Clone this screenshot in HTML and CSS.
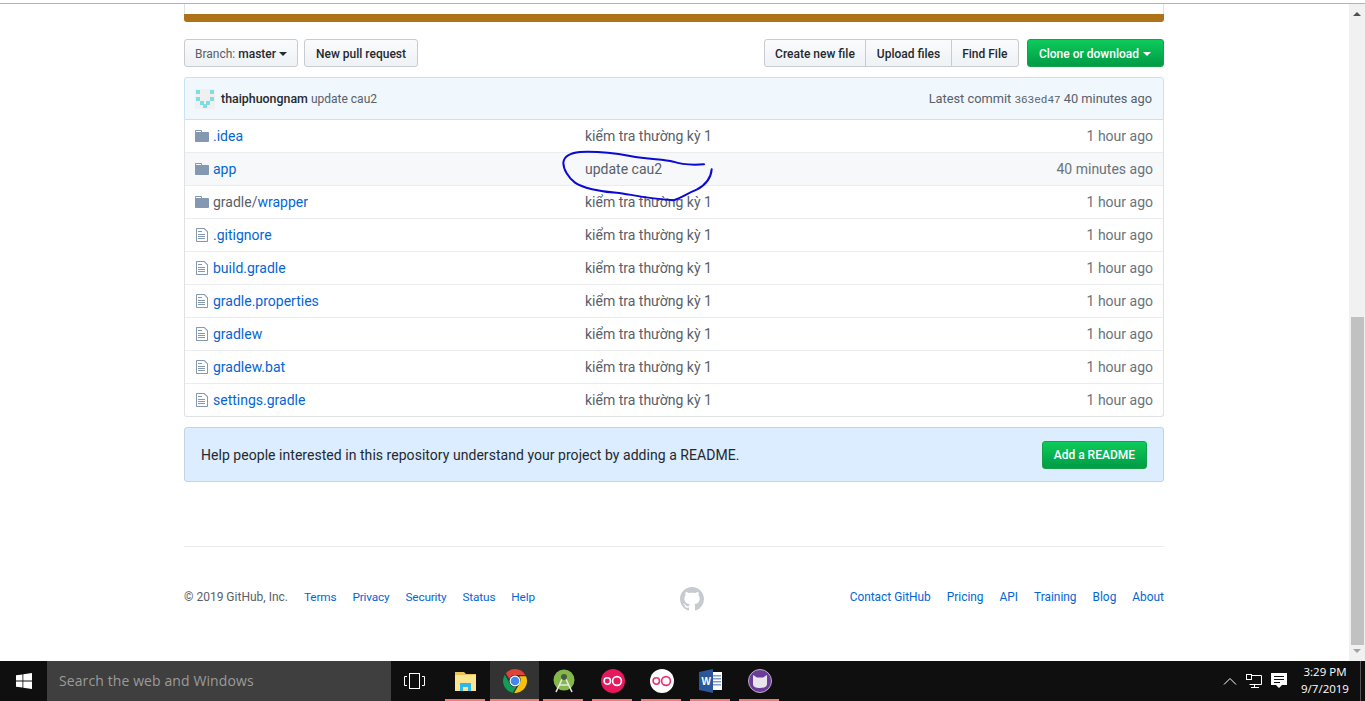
FILE: index.html
```html
<!DOCTYPE html>
<html lang="en">
<head>
    <meta charset="UTF-8">
    <meta name="viewport" content="width=device-width, initial-scale=1.0">
    <title>Repository</title>
    <link rel="stylesheet" href="styles.css">
</head>
<body>

<div class="screen">
    <div class="window">
        <main class="page">
            <div class="container">
                <div class="languages"><div class="languages-bar"></div></div>

                <div class="toolbar">
                    <button class="btn btn-branch"><span class="muted">Branch:</span> <b>master</b><i class="caret"></i></button>
                    <button class="btn">New pull request</button>
                    <div class="spacer"></div>
                    <div class="btn-group">
                        <button class="btn">Create new file</button>
                        <button class="btn">Upload files</button>
                        <button class="btn">Find File</button>
                    </div>
                    <button class="btn btn-green btn-clone">Clone or download<i class="caret"></i></button>
                </div>

                <div class="commit">
                    <svg class="avatar" viewBox="0 0 20 20">
                        <rect width="20" height="20" rx="1" fill="#f0f0f0"/>
                        <g fill="#7ddfe2">
                            <rect x="1" y="1" width="4" height="4"/>
                            <rect x="15" y="1" width="4" height="4"/>
                            <rect x="1" y="8" width="4" height="4"/>
                            <rect x="15" y="8" width="4" height="4"/>
                            <rect x="5" y="12" width="4" height="4"/>
                            <rect x="11" y="12" width="4" height="4"/>
                            <rect x="8" y="15" width="4" height="4"/>
                        </g>
                    </svg>
                    <a class="commit-author">thaiphuongnam</a>
                    <span class="muted commit-msg">update cau2</span>
                    <div class="spacer"></div>
                    <span class="muted">Latest commit <span class="sha">363ed47</span> 40 minutes ago</span>
                </div>

                <div class="files">
                    <div class="file-row">
                        <svg class="icon" viewBox="0 0 14 16"><path d="M13 4H7V3c0-.66-.31-1-1-1H1c-.55 0-1 .45-1 1v10c0 .55.45 1 1 1h12c.55 0 1-.45 1-1V5c0-.55-.45-1-1-1zM6 4H1V3h5v1z"/></svg>
                        <a class="file-name">.idea</a>
                        <span class="file-msg">kiểm tra thường kỳ 1</span>
                        <span class="file-age">1 hour ago</span>
                    </div>
                    <div class="file-row hover">
                        <svg class="icon" viewBox="0 0 14 16"><path d="M13 4H7V3c0-.66-.31-1-1-1H1c-.55 0-1 .45-1 1v10c0 .55.45 1 1 1h12c.55 0 1-.45 1-1V5c0-.55-.45-1-1-1zM6 4H1V3h5v1z"/></svg>
                        <a class="file-name">app</a>
                        <span class="file-msg">update cau2</span>
                        <span class="file-age">40 minutes ago</span>
                    </div>
                    <div class="file-row">
                        <svg class="icon" viewBox="0 0 14 16"><path d="M13 4H7V3c0-.66-.31-1-1-1H1c-.55 0-1 .45-1 1v10c0 .55.45 1 1 1h12c.55 0 1-.45 1-1V5c0-.55-.45-1-1-1zM6 4H1V3h5v1z"/></svg>
                        <a class="file-name"><span class="muted">gradle/</span>wrapper</a>
                        <span class="file-msg">kiểm tra thường kỳ 1</span>
                        <span class="file-age">1 hour ago</span>
                    </div>
                    <div class="file-row">
                        <svg class="icon" viewBox="0 0 12 16"><path d="M6 5H2V4h4v1zM2 8h7V7H2v1zm0 2h7V9H2v1zm0 2h7v-1H2v1zm10-7.500V14c0 .55-.45 1-1 1H1c-.55 0-1-.45-1-1V2c0-.55.45-1 1-1h7.500L12 4.500zM11 5L8 2H1v12h10V5z"/></svg>
                        <a class="file-name">.gitignore</a>
                        <span class="file-msg">kiểm tra thường kỳ 1</span>
                        <span class="file-age">1 hour ago</span>
                    </div>
                    <div class="file-row">
                        <svg class="icon" viewBox="0 0 12 16"><path d="M6 5H2V4h4v1zM2 8h7V7H2v1zm0 2h7V9H2v1zm0 2h7v-1H2v1zm10-7.500V14c0 .55-.45 1-1 1H1c-.55 0-1-.45-1-1V2c0-.55.45-1 1-1h7.500L12 4.500zM11 5L8 2H1v12h10V5z"/></svg>
                        <a class="file-name">build.gradle</a>
                        <span class="file-msg">kiểm tra thường kỳ 1</span>
                        <span class="file-age">1 hour ago</span>
                    </div>
                    <div class="file-row">
                        <svg class="icon" viewBox="0 0 12 16"><path d="M6 5H2V4h4v1zM2 8h7V7H2v1zm0 2h7V9H2v1zm0 2h7v-1H2v1zm10-7.500V14c0 .55-.45 1-1 1H1c-.55 0-1-.45-1-1V2c0-.55.45-1 1-1h7.500L12 4.500zM11 5L8 2H1v12h10V5z"/></svg>
                        <a class="file-name">gradle.properties</a>
                        <span class="file-msg">kiểm tra thường kỳ 1</span>
                        <span class="file-age">1 hour ago</span>
                    </div>
                    <div class="file-row">
                        <svg class="icon" viewBox="0 0 12 16"><path d="M6 5H2V4h4v1zM2 8h7V7H2v1zm0 2h7V9H2v1zm0 2h7v-1H2v1zm10-7.500V14c0 .55-.45 1-1 1H1c-.55 0-1-.45-1-1V2c0-.55.45-1 1-1h7.500L12 4.500zM11 5L8 2H1v12h10V5z"/></svg>
                        <a class="file-name">gradlew</a>
                        <span class="file-msg">kiểm tra thường kỳ 1</span>
                        <span class="file-age">1 hour ago</span>
                    </div>
                    <div class="file-row">
                        <svg class="icon" viewBox="0 0 12 16"><path d="M6 5H2V4h4v1zM2 8h7V7H2v1zm0 2h7V9H2v1zm0 2h7v-1H2v1zm10-7.500V14c0 .55-.45 1-1 1H1c-.55 0-1-.45-1-1V2c0-.55.45-1 1-1h7.500L12 4.500zM11 5L8 2H1v12h10V5z"/></svg>
                        <a class="file-name">gradlew.bat</a>
                        <span class="file-msg">kiểm tra thường kỳ 1</span>
                        <span class="file-age">1 hour ago</span>
                    </div>
                    <div class="file-row">
                        <svg class="icon" viewBox="0 0 12 16"><path d="M6 5H2V4h4v1zM2 8h7V7H2v1zm0 2h7V9H2v1zm0 2h7v-1H2v1zm10-7.500V14c0 .55-.45 1-1 1H1c-.55 0-1-.45-1-1V2c0-.55.45-1 1-1h7.500L12 4.500zM11 5L8 2H1v12h10V5z"/></svg>
                        <a class="file-name">settings.gradle</a>
                        <span class="file-msg">kiểm tra thường kỳ 1</span>
                        <span class="file-age">1 hour ago</span>
                    </div>

                    <!-- hand drawn circle around the app row message -->
                    <svg class="scribble" viewBox="0 0 540 210">
                        <path d="M462 70C430 72 400 73 370 62C340 54 300 56 240 45C190 36 130 31 90 33C60 36 42 45 40 65C40 85 55 110 75 125C95 140 150 152 200 155C240 160 290 172 370 178C395 170 410 158 440 146C470 130 483 110 485 85"/>
                    </svg>
                </div>

                <div class="readme-prompt">
                    <span class="readme-text">Help people interested in this repository understand your project by adding a README.</span>
                    <button class="btn btn-green">Add a README</button>
                </div>

                <footer class="footer">
                    <div class="footer-left">
                        <span class="copyright">© 2019 GitHub, Inc.</span>
                        <a>Terms</a><a>Privacy</a><a>Security</a><a>Status</a><a>Help</a>
                    </div>
                    <svg class="footer-mark" viewBox="0 0 16 16"><path d="M8 0C3.58 0 0 3.58 0 8c0 3.54 2.29 6.530 5.470 7.590.4.07.55-.17.55-.38 0-.19-.01-.82-.01-1.490-2.010.37-2.530-.49-2.690-.94-.09-.23-.48-.94-.82-1.130-.28-.15-.68-.52-.01-.53.63-.01 1.080.58 1.230.82.72 1.210 1.870.87 2.330.66.07-.52.28-.87.51-1.070-1.780-.2-3.640-.89-3.640-3.950 0-.87.31-1.590.82-2.150-.08-.2-.36-1.020.08-2.120 0 0 .67-.21 2.200.82.64-.18 1.320-.27 2-.27.68 0 1.360.09 2 .27 1.530-1.040 2.200-.82 2.200-.82.44 1.100.16 1.920.08 2.120.51.56.82 1.270.82 2.150 0 3.070-1.870 3.750-3.650 3.950.29.25.54.73.54 1.480 0 1.070-.01 1.930-.01 2.200 0 .21.15.46.55.38A8.013 8.013 0 0 0 16 8c0-4.420-3.580-8-8-8z"/></svg>
                    <div class="footer-right">
                        <a>Contact GitHub</a><a>Pricing</a><a>API</a><a>Training</a><a>Blog</a><a>About</a>
                    </div>
                </footer>
            </div>
        </main>

        <div class="scrollbar">
            <i class="arrow-up"></i>
            <div class="thumb"></div>
            <i class="arrow-down"></i>
        </div>
    </div>

    <div class="taskbar">
        <div class="start">
            <svg viewBox="0 0 16 16" width="16" height="16"><path fill="#fff" d="M0 2.300l6.500-.9v6.200H0zM7.300 1.300L16 0v7.600H7.300zM0 8.400h6.500v6.200L0 13.700zM7.300 8.400H16V16l-8.700-1.300z"/></svg>
        </div>
        <div class="search">Search the web and Windows</div>
        <div class="task-view">
            <svg viewBox="0 0 21 16" width="21" height="16" fill="none" stroke="#fff"><rect x="5.500" y="0.500" width="10" height="15"/><path d="M3 3.500H0.500v9H3M18 3.500h2.500v9H18"/></svg>
        </div>
        <div class="app running">
            <svg viewBox="0 0 24 24" width="24" height="24">
                <path fill="#e8c35a" d="M1 3h9l2 2h10v17H1z"/>
                <path fill="#fde58f" d="M1 6h21v16H1z"/>
                <path fill="#2bb9ee" d="M6 14h11v8h-3v-4H9v4H6z"/>
            </svg>
        </div>
        <div class="app running active">
            <svg viewBox="0 0 24 24" width="24" height="24">
                <path fill="#db4437" d="M12 0a12 12 0 0 1 10.400 6H12a6 6 0 0 0-5.700 4L2.900 4.200A12 12 0 0 1 12 0z"/>
                <path fill="#0f9d58" d="M1.800 5.700l5 8.700a6 6 0 0 0 6.400 3.500l-3.400 5.900A12 12 0 0 1 1.800 5.700z"/>
                <path fill="#f4c20d" d="M23 7.200a12 12 0 0 1-11.800 16.800l5-8.800A6 6 0 0 0 16.300 7.200z"/>
                <circle cx="12" cy="12" r="5.400" fill="#fff"/>
                <circle cx="12" cy="12" r="4.300" fill="#4285f4"/>
            </svg>
        </div>
        <div class="app running">
            <svg viewBox="0 0 24 24" width="24" height="24">
                <circle cx="12" cy="11" r="10.500" fill="#85b84a"/>
                <path fill="none" stroke="#e8e8e0" stroke-width="1.600" d="M12 6L4 23M12 6l8 17M7 16h10"/>
                <circle cx="12" cy="8" r="3" fill="#4a5a44"/>
            </svg>
        </div>
        <div class="app running">
            <svg class="rings rings-red" viewBox="0 0 24 24" width="24" height="24">
                <circle class="rings-bg" cx="12" cy="12" r="12"/>
                <circle class="ring" cx="6.300" cy="12" r="3.200"/>
                <circle class="ring" cx="16" cy="12" r="4.400"/>
            </svg>
        </div>
        <div class="app running">
            <svg class="rings rings-white" viewBox="0 0 24 24" width="24" height="24">
                <circle class="rings-bg" cx="12" cy="12" r="12"/>
                <circle class="ring" cx="6.300" cy="12" r="3.200"/>
                <circle class="ring" cx="16" cy="12" r="4.400"/>
            </svg>
        </div>
        <div class="app running">
            <svg viewBox="0 0 24 24" width="24" height="24">
                <path fill="#fff" d="M13 3h10v18H13z"/>
                <path fill="#7f9dc9" d="M14 6h8v1.500h-8zM14 9h8v1.500h-8zM14 12h8v1.500h-8zM14 15h8v1.500h-8z"/>
                <path fill="#2b579a" d="M0 3l14-3v24L0 21z"/>
                <text x="2.500" y="16" class="word-letter">W</text>
            </svg>
        </div>
        <div class="app running">
            <svg viewBox="0 0 24 24" width="24" height="24">
                <circle cx="12" cy="12" r="11.500" fill="#6b3d99" stroke="#b9b2c4"/>
                <path fill="#e6e6ec" d="M5 6l4 2.500h6L19 6v9c0 3-3 4-7 4s-7-1-7-4z"/>
            </svg>
        </div>
        <div class="spacer"></div>
        <div class="tray">
            <svg viewBox="0 0 14 8" width="14" height="8" fill="none" stroke="#fff"><path d="M1 7.500l6-6 6 6"/></svg>
            <svg viewBox="0 0 16 15" width="16" height="15" fill="none" stroke="#fff"><path d="M3.500 1.500h12v9h-12M8.500 10.500v3M5 13.500h8"/><rect x="0.500" y="0.500" width="5" height="5" fill="#0f0f0f"/></svg>
            <svg viewBox="0 0 16 16" width="16" height="16"><path fill="#fff" d="M0 0h16v12h-5l-3 3-3-3H0z"/><path stroke="#0f0f0f" d="M3 3.500h10M3 6.500h10M3 9.500h6"/></svg>
        </div>
        <div class="clock">
            <div>3:29 PM</div>
            <div>9/7/2019</div>
        </div>
        <div class="show-desktop"></div>
    </div>
</div>

</body>
</html>
```

FILE: styles.css
```css
* {
    box-sizing: border-box;
}
body {
    margin: 0;
    font-family: Roboto, "Open Sans", sans-serif;
    font-size: 14px;
    color: #24292e;
    background-color: #fff;
}
a {
    color: #0366d6;
}
.screen {
    height: 701px;
    display: flex;
    flex-direction: column;
    overflow: hidden;
}
.window {
    height: 661px;
    display: flex;
    padding-top: 3px;
    position: relative;
}
.window::before {
    content: "";
    position: absolute;
    top: 3px;
    left: 0;
    right: 0;
    height: 1px;
    background-color: #b4b4b4;
}
.page {
    flex: 1;
    min-width: 0;
    padding-right: 1px;
}
.container {
    width: 980px;
    margin: 0 auto;
}
.spacer {
    flex: 1;
}
.muted {
    color: #586069;
}

/* language bar */
.languages {
    height: 19px;
    padding-top: 11px;
    border: 1px solid #dfe2e5;
    border-top: none;
    border-radius: 0 0 3px 3px;
}
.languages-bar {
    height: 8px;
    margin: 0 -1px;
    background-color: #b07219;
    border-radius: 0 0 3px 3px;
}

/* buttons */
.toolbar {
    display: flex;
    align-items: center;
    margin-top: 17px;
    gap: 6px;
}
.btn {
    height: 28px;
    padding: 1px 11px 0;
    font-family: inherit;
    font-size: 12px;
    font-weight: 500;
    color: #24292e;
    background-image: linear-gradient(-180deg, #fafbfc, #eff3f6 90%);
    border: 1px solid #c9cccf;
    border-radius: 3px;
    white-space: nowrap;
}
.btn b {
    font-weight: 500;
}
.btn .muted {
    font-weight: 400;
}
.btn-branch {
    padding: 1px 10px 0;
}
.btn-branch .caret {
    margin-left: 3px;
}
.btn-clone {
    padding-right: 12px;
}
.caret {
    display: inline-block;
    margin-left: 4px;
    vertical-align: 2px;
    border: 4px solid transparent;
    border-top-color: currentColor;
    border-bottom: 0;
}
.btn-group {
    display: flex;
    margin-right: 2px;
}
.btn-group .btn {
    padding: 1px 10.5px 0;
    border-radius: 0;
    margin-left: -1px;
}
.btn-group .btn:first-child {
    border-radius: 3px 0 0 3px;
    margin-left: 0;
}
.btn-group .btn:last-child {
    border-radius: 0 3px 3px 0;
}
.btn-green {
    color: #fff;
    background-image: linear-gradient(-180deg, #0ecb5a, #01a048 90%);
    border-color: #17a04a;
}

/* commit box */
.commit {
    display: flex;
    align-items: center;
    height: 43px;
    margin-top: 10px;
    padding: 0 11px 0 10px;
    font-size: 12.8px;
    background-color: #f0f7fd;
    border: 1px solid #c8e1f5;
    border-radius: 3px 3px 0 0;
}
.avatar {
    width: 20px;
    height: 20px;
    margin-right: 6px;
}
.commit-author {
    margin-right: 3px;
    font-size: 12.4px;
    font-weight: 500;
    color: #24292e;
}
.commit-msg {
    font-size: 12px;
}
.sha {
    font-family: "Liberation Mono", monospace;
    font-size: 11px;
}

/* file list */
.files {
    position: relative;
    border: 1px solid #dfe2e5;
    border-top: none;
    border-radius: 0 0 3px 3px;
}
.file-row {
    display: flex;
    align-items: center;
    height: 33px;
    padding: 0 10px;
    border-top: 1px solid #eaecef;
}
.file-row:first-child {
    border-top: none;
    height: 32px;
}
.file-row.hover {
    background-color: #f6f8fa;
}
.icon {
    width: 14px;
    height: 16px;
    margin-right: 4px;
    fill: #8498b2;
    flex-shrink: 0;
}
.file-name {
    width: 372px;
}
.file-msg {
    color: #586069;
}
.file-age {
    margin-left: auto;
    color: #6a737d;
}
.scribble {
    position: absolute;
    left: 365px;
    top: 21px;
    width: 180px;
    height: 70px;
    overflow: visible;
}
.scribble path {
    fill: none;
    stroke: #0a0ad2;
    stroke-width: 6;
    stroke-linecap: round;
}

/* readme prompt */
.readme-prompt {
    display: flex;
    align-items: center;
    justify-content: space-between;
    height: 55px;
    margin-top: 10px;
    padding: 0 16px;
    background-color: #dbedff;
    border: 1px solid #bfd4e8;
    border-radius: 3px;
}
.readme-text {
    letter-spacing: 0.04px;
}

/* footer */
.footer {
    display: flex;
    align-items: center;
    height: 101px;
    margin-top: 64px;
    font-size: 12px;
    border-top: 1px solid #eaecef;
}
.footer-left {
    display: flex;
    gap: 16px;
    width: 496px;
}
.footer-left a {
    font-size: 11.8px;
    letter-spacing: -0.15px;
}
.footer-right {
    display: flex;
    gap: 16px;
    width: 460px;
    justify-content: flex-end;
}
.footer-right a {
    font-size: 11.9px;
}
.copyright {
    color: #586069;
}
.footer-mark {
    width: 24px;
    height: 24px;
    margin-top: 4px;
    fill: #c6cbd1;
}

/* fake scrollbar */
.scrollbar {
    width: 16px;
    margin-top: 1px;
    background-color: #f1f1f1;
    position: relative;
}
.thumb {
    position: absolute;
    top: 313px;
    left: 2px;
    width: 13px;
    height: 328px;
    background-color: #c1c1c1;
}
.arrow-up,
.arrow-down {
    position: absolute;
    left: 4px;
    border: 4px solid transparent;
}
.arrow-up {
    top: 4px;
    border-bottom-color: #505050;
}
.arrow-down {
    bottom: 4px;
    border-top-color: #a3a3a3;
}

/* taskbar */
.taskbar {
    display: flex;
    height: 40px;
    background-color: #0f0f0f;
    font-family: "Open Sans", sans-serif;
}
.start {
    width: 47px;
    display: flex;
    align-items: center;
    justify-content: center;
}
.search {
    width: 344px;
    padding-left: 12px;
    line-height: 40px;
    font-size: 14px;
    letter-spacing: 0.1px;
    color: #9b9b9b;
    background-color: #3f3f3f;
}
.task-view {
    width: 50px;
    padding-right: 3px;
    display: flex;
    align-items: center;
    justify-content: center;
}
.app {
    width: 49px;
    display: flex;
    align-items: center;
    justify-content: center;
    position: relative;
}
.app.active {
    background-color: #333;
}
.running::after {
    content: "";
    position: absolute;
    bottom: 0;
    left: 4px;
    right: 5px;
    height: 2px;
    background-color: #f47a74;
}
.active::after {
    left: 0;
    right: 0;
}
.ring {
    fill: none;
    stroke-width: 1.6;
}
.rings-red .rings-bg {
    fill: #e6185e;
}
.rings-red .ring {
    stroke: #fff;
}
.rings-white .rings-bg {
    fill: #fff;
}
.rings-white .ring {
    stroke: #e8316d;
}
.word-letter {
    font-family: "Liberation Sans", sans-serif;
    font-size: 10px;
    font-weight: 700;
    fill: #fff;
}
.tray {
    display: flex;
    align-items: center;
    gap: 9px;
    margin-right: 7px;
}
.clock {
    width: 62px;
    margin-right: 4px;
    padding-top: 2px;
    font-size: 11.5px;
    line-height: 17px;
    text-align: center;
    color: #fff;
}
.show-desktop {
    width: 5px;
    border-left: 1px solid #555;
}
```
